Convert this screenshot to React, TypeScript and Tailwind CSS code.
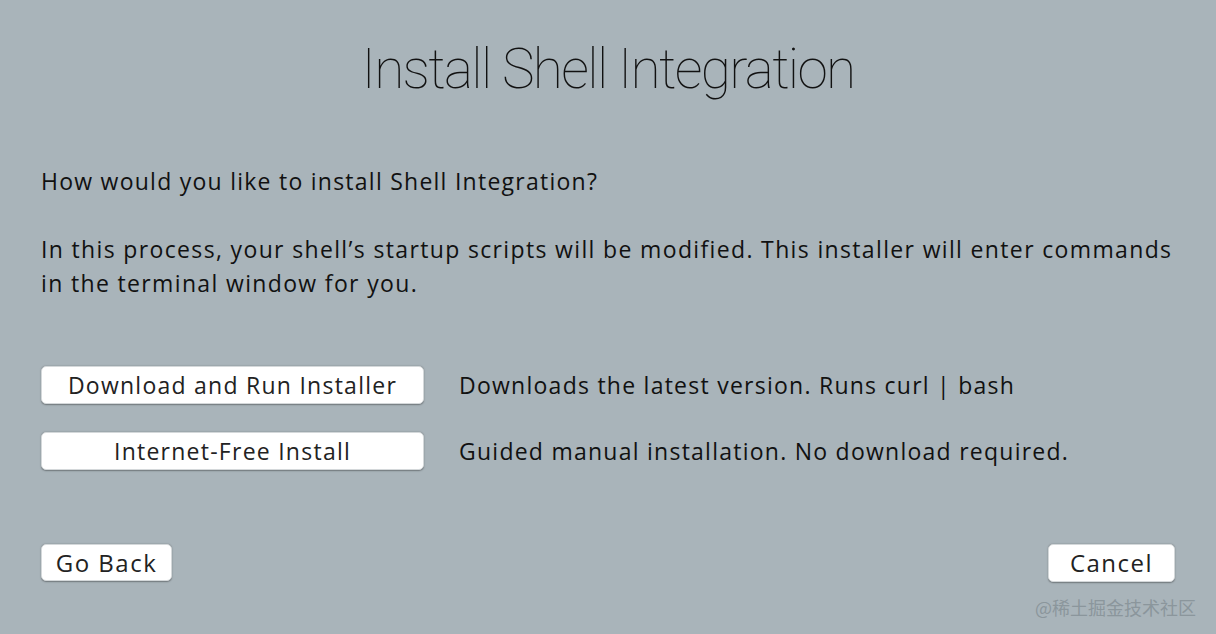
export default function App() {
  const btn =
    "bg-white rounded-[5px] shadow-[0_0.5px_1.5px_rgba(0,0,0,0.35)] border border-[#d4d8da] text-[#222] flex items-center justify-center";
  return (
    <div
      className="w-[1216px] h-[634px] bg-[#a9b4ba] text-[#111] flex flex-col px-[41px] relative overflow-hidden tracking-[1.25px]"
      style={{ fontFamily: "'Open Sans', 'Liberation Sans', sans-serif" }}
    >
      <h1
        className="text-center text-[55px] leading-none font-thin mt-[42px] tracking-[-1.7px]"
        style={{ fontFamily: "Roboto, 'Liberation Sans', sans-serif" }}
      >
        Install Shell Integration
      </h1>
      <p className="text-[23px] leading-[34px] mt-[67px]">How would you like to install Shell Integration?</p>
      <p className="text-[23px] leading-[34px] mt-[34px] whitespace-nowrap tracking-[1.35px]">
        In this process, your shell’s startup scripts will be modified. This installer will enter commands
        <br />
        in the terminal window for you.
      </p>
      <div className="flex flex-col gap-[28px] mt-[66px]">
        <div className="flex items-center gap-[35px]">
          <button className={`${btn} w-[383px] h-[38px] text-[23px]`}>Download and Run Installer</button>
          <span className="text-[23px]">Downloads the latest version. Runs curl | bash</span>
        </div>
        <div className="flex items-center gap-[35px]">
          <button className={`${btn} w-[383px] h-[38px] text-[23px]`}>Internet-Free Install</button>
          <span className="text-[23px]">Guided manual installation. No download required.</span>
        </div>
      </div>
      <div className="flex justify-between mt-[74px]">
        <button className={`${btn} w-[131px] h-[37px] text-[24px] tracking-[1.5px]`}>Go Back</button>
        <button className={`${btn} w-[127px] h-[38px] text-[24px] tracking-[1.5px]`}>Cancel</button>
      </div>
      <div
        className="absolute right-[20px] bottom-[18px] text-[18px] text-[#8b969c] leading-none tracking-normal"
        style={{ fontFamily: "'Noto Sans CJK SC', sans-serif" }}
      >
        @稀土掘金技术社区
      </div>
    </div>
  );
}
